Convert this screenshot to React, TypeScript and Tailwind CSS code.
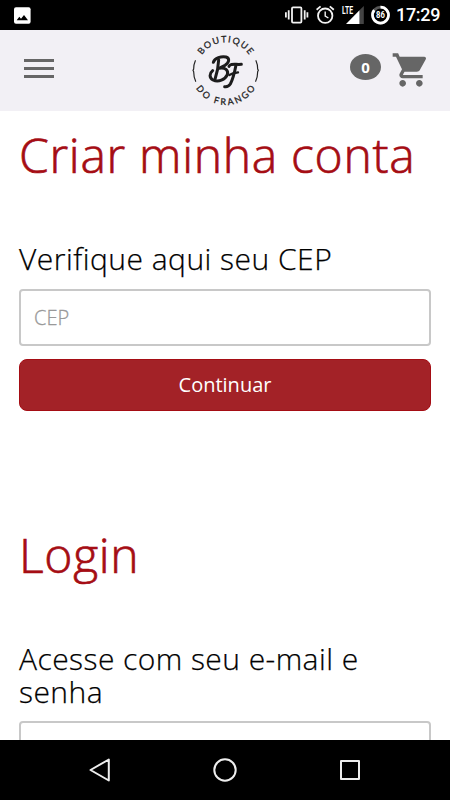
import React from 'react';

const StatusBar = () => {
  return (
    <div className="flex h-[30px] shrink-0 items-center bg-black pl-[14px] pr-[10px]">
      <svg className="size-[17px]" viewBox="0 0 17 17">
        <rect x="0" y="0.3" width="16.6" height="16.4" rx="2" fill="#fff" />
        <path d="M2.7 13.2 L5.3 9.7 L7 11.8 L10 8 L14 13.2 Z" fill="#000" />
      </svg>
      <svg className="ml-auto h-[30px] w-[110px]" viewBox="0 0 110 30">
        {/* vibrate */}
        <g stroke="#f2f2f2" fill="none" strokeWidth="1.8">
          <rect x="7" y="7.4" width="9.4" height="15.2" rx="1" />
          <path d="M3.7 10.3V19.6M0.9 12.3V17.6M19.7 10.3V19.6M22.4 12.3V17.6" strokeWidth="1.8" />
        </g>
        {/* alarm */}
        <g stroke="#f2f2f2" fill="none" strokeWidth="1.8">
          <circle cx="40.2" cy="15.7" r="7.2" />
          <path d="M31.6 9.8L35.6 6.4M44.8 6.4L48.8 9.8" />
          <path d="M40.2 11.6V16L43.4 18" strokeWidth="1.4" />
        </g>
        {/* mobile signal */}
        <path d="M78.8 6V24H74.5V10.3Z" fill="#444" />
        <path d="M74.5 10.3V24H61Z" fill="#fff" />
        <text x="57" y="14" fill="#fff" fontSize="10" fontWeight="700" textLength="11" lengthAdjust="spacingAndGlyphs" className="font-['Roboto',sans-serif]">LTE</text>
        {/* battery */}
        <circle cx="95.5" cy="15.1" r="8" fill="none" stroke="#555" strokeWidth="2.7" />
        <path d="M95.5 7.1A8 8 0 1 1 89.2 10.2" fill="none" stroke="#fff" strokeWidth="2.7" />
        <text x="95.5" y="18.4" textAnchor="middle" fill="#fff" fontSize="9" fontWeight="700" textLength="8.8" lengthAdjust="spacingAndGlyphs" className="font-['Roboto',sans-serif]">86</text>
      </svg>
      <span className="ml-[1px] w-[44px] whitespace-nowrap font-['Roboto',sans-serif] text-[18px] leading-[32px] font-medium tracking-[-0.3px] text-white">17:29</span>
    </div>
  );
};

const Logo = () => {
  return (
    <svg className="h-[81px] w-[90px]" viewBox="0 6 270 243">
      <defs>
        <path id="logo-top" d="M52 128A85 85 0 0 1 222 128" />
        <path id="logo-bottom" d="M34 128A103 103 0 0 0 240 128" />
      </defs>
      <g fill="#222" stroke="#222" strokeWidth="0.8" fontSize="27" className="font-['Lato',sans-serif]">
        <text textAnchor="middle" letterSpacing="4">
          <textPath href="#logo-top" startOffset="50.5%">BOUTIQUE</textPath>
        </text>
        <text textAnchor="middle" letterSpacing="6.5">
          <textPath href="#logo-bottom" startOffset="51%">DO FRANGO</textPath>
        </text>
      </g>
      <g fill="none" stroke="#222" strokeWidth="3.5" strokeLinecap="round">
        <path d="M46 98Q41 109 41 123L39 127L41 131Q41 146 47 160" />
        <path d="M228 98Q233 109 233 123L235 127L233 131Q233 146 227 160" />
      </g>
      <g fill="none" stroke="#1c1c1c" strokeWidth="9" strokeLinecap="round" strokeLinejoin="round">
        <path d="M116 96C115 117 111 136 105 154" />
        <path d="M100 103C104 90 124 84 138 87C150 91 148 104 135 112L117 121C136 117 146 127 142 140C136 155 115 164 99 156C87 149 88 136 98 128" />
        <path d="M147 115C151 106 164 110 184 109" />
        <path d="M168 111C164 132 159 153 151 168C147 174 140 177 134 176" />
        <path d="M148 141C156 136 166 134 174 133" strokeWidth="7" />
      </g>
    </svg>
  );
};

const Header = () => {
  return (
    <header className="grid h-[81px] shrink-0 grid-cols-[1fr_90px_1fr] items-center bg-[#f2f0f5]">
      <button className="ml-6 flex w-[30px] flex-col gap-[5px] pb-[4px]" aria-label="Menu">
        <span className="h-[3px] w-full bg-[#666]"></span>
        <span className="h-[3px] w-full bg-[#666]"></span>
        <span className="h-[3px] w-full bg-[#666]"></span>
      </button>
      <Logo />
      <div className="flex items-center justify-end pr-[19px]">
        <span className="mb-[7px] mr-[10px] flex h-[26px] w-[31px] items-center justify-center rounded-[50%] bg-[#666] text-[15px] font-bold text-white">0</span>
        <svg className="mb-[1px] size-[40px]" viewBox="0 0 24 24" fill="#666">
          <path d="M7 18c-1.1 0-1.99.9-1.99 2S5.9 22 7 22s2-.9 2-2-.9-2-2-2zM1 2v2h2l3.6 7.59-1.35 2.45c-.16.28-.25.61-.25.96 0 1.1.9 2 2 2h12v-2H7.42c-.14 0-.25-.11-.25-.25l.03-.12.9-1.63h7.45c.75 0 1.41-.41 1.75-1.03l3.58-6.49c.08-.14.12-.31.12-.48 0-.55-.45-1-1-1H5.21l-.94-2H1zm16 16c-1.1 0-1.99.9-1.99 2s.89 2 1.99 2 2-.9 2-2-.9-2-2-2z" />
        </svg>
      </div>
    </header>
  );
};

const NavigationBar = () => {
  return (
    <div className="flex h-[60px] shrink-0 items-center justify-around bg-black px-[37px]">
      <svg className="size-[24px]" viewBox="0 0 24 24" fill="none" stroke="#eee" strokeWidth="2" strokeLinejoin="round">
        <path d="M20.8 1.5V22.5L2.5 12Z" />
      </svg>
      <svg className="size-[24px]" viewBox="0 0 24 24" fill="none" stroke="#eee" strokeWidth="2">
        <circle cx="12" cy="12" r="10.7" />
      </svg>
      <svg className="size-[24px]" viewBox="0 0 24 24" fill="none" stroke="#eee" strokeWidth="2" strokeLinejoin="round">
        <rect x="3" y="3" width="18" height="18" />
      </svg>
    </div>
  );
};

const App = () => {
  return (
    <div className="flex h-[800px] w-[450px] flex-col overflow-hidden bg-white font-['Open_Sans',sans-serif]">
      <StatusBar />
      <Header />
      <main className="min-h-0 flex-1 overflow-hidden px-[19px]">
        <h1 className="mt-[14px] whitespace-nowrap text-[48px] font-light leading-[60px] tracking-[0.7px] text-[#a50d14] [-webkit-text-stroke:0.7px_#a50d14]">Criar minha conta</h1>
        <form>
          <label className="mt-[57px] block whitespace-nowrap text-[30px] font-light leading-[33px] tracking-[0.48px] text-black [-webkit-text-stroke:0.25px_#000]" htmlFor="cep">Verifique aqui seu CEP</label>
          <input className="mt-[14px] block h-[57px] w-full rounded-[4px] border-2 border-[#c8c8c8] px-[13px] text-[20px] font-light text-black placeholder:text-[#999] placeholder:[-webkit-text-stroke:0.3px_#999] focus:outline-none" id="cep" type="text" placeholder="CEP" />
          <button className="mt-[13px] block h-[52px] w-full rounded-[8px] border border-[#a50d14] bg-[#a32227] text-[20px] text-white" type="button">Continuar</button>
        </form>
        <h1 className="mt-[114px] text-[48px] font-light leading-[60px] tracking-[0.7px] text-[#a50d14] [-webkit-text-stroke:0.7px_#a50d14]">Login</h1>
        <form>
          <label className="mt-[57px] block text-[30px] font-light leading-[33px] tracking-[0.44px] text-black [-webkit-text-stroke:0.25px_#000]" htmlFor="email">Acesse com seu e-mail e senha</label>
          <input className="mt-[13px] block h-[57px] w-full rounded-[4px] border-2 border-[#c8c8c8] px-[13px] text-[20px] font-light" id="email" type="email" />
        </form>
      </main>
      <NavigationBar />
    </div>
  );
};

export default App;
